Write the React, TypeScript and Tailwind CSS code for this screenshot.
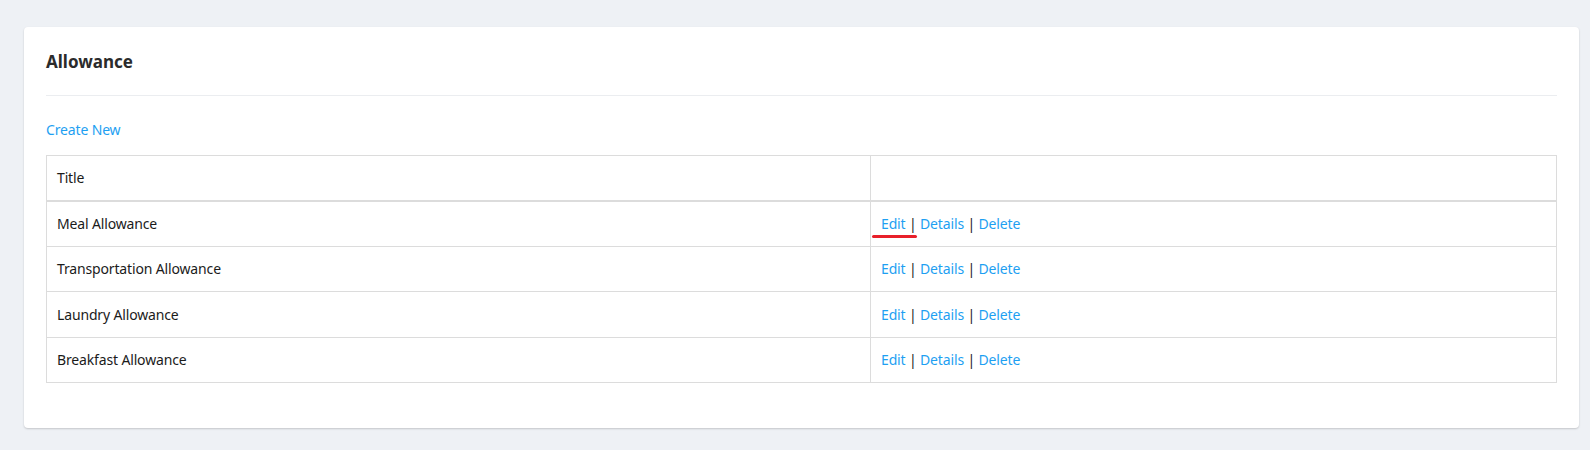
import React from "react"

const rows = [
  "Meal Allowance",
  "Transportation Allowance",
  "Laundry Allowance",
  "Breakfast Allowance",
]

const App: React.FC = () => {
  return (
    <div
      className="min-h-[450px] bg-[#eef1f5] pt-[27px] pl-[24px] pr-[11px]"
      style={{ fontFamily: '"Noto Sans", "Open Sans", sans-serif' }}
    >
      <div className="rounded-[4px] bg-white px-[22px] pt-[22px] pb-[45px] shadow-[0_1px_2px_rgba(0,0,0,0.18)]">
        <h2 className="text-[17px] font-bold leading-[26px] text-[#2b2b2b]">Allowance</h2>
        <div className="mt-[20px] border-t border-[#ebedf0]" />
        <a href="#" className="mt-[24px] block text-[14px] leading-[20px] tracking-[-0.15px] text-[#1e9ff2]">
          Create New
        </a>
        <table className="mt-[15px] w-full border-collapse text-[14px] tracking-[-0.15px] text-[#1b1b1b]">
          <thead>
            <tr className="h-[45px] border border-[#dcdcdc] border-b-2">
              <th className="w-[824px] border-r border-[#dcdcdc] px-[10px] text-left font-normal">Title</th>
              <th />
            </tr>
          </thead>
          <tbody>
            {rows.map((title, i) => (
              <tr key={title} className="h-[45.5px] border border-[#dcdcdc]">
                <td className="border-r border-[#dcdcdc] px-[10px]">{title}</td>
                <td className="relative px-[10px]">
                  <a href="#" className="text-[#1e9ff2]">Edit</a> |{" "}
                  <a href="#" className="text-[#1e9ff2]">Details</a> |{" "}
                  <a href="#" className="text-[#1e9ff2]">Delete</a>
                  {i === 0 && (
                    <span className="absolute left-[1px] top-[33px] h-[3px] w-[45px] rounded-full bg-[#e8202a]" />
                  )}
                </td>
              </tr>
            ))}
          </tbody>
        </table>
      </div>
    </div>
  )
}

export default App
